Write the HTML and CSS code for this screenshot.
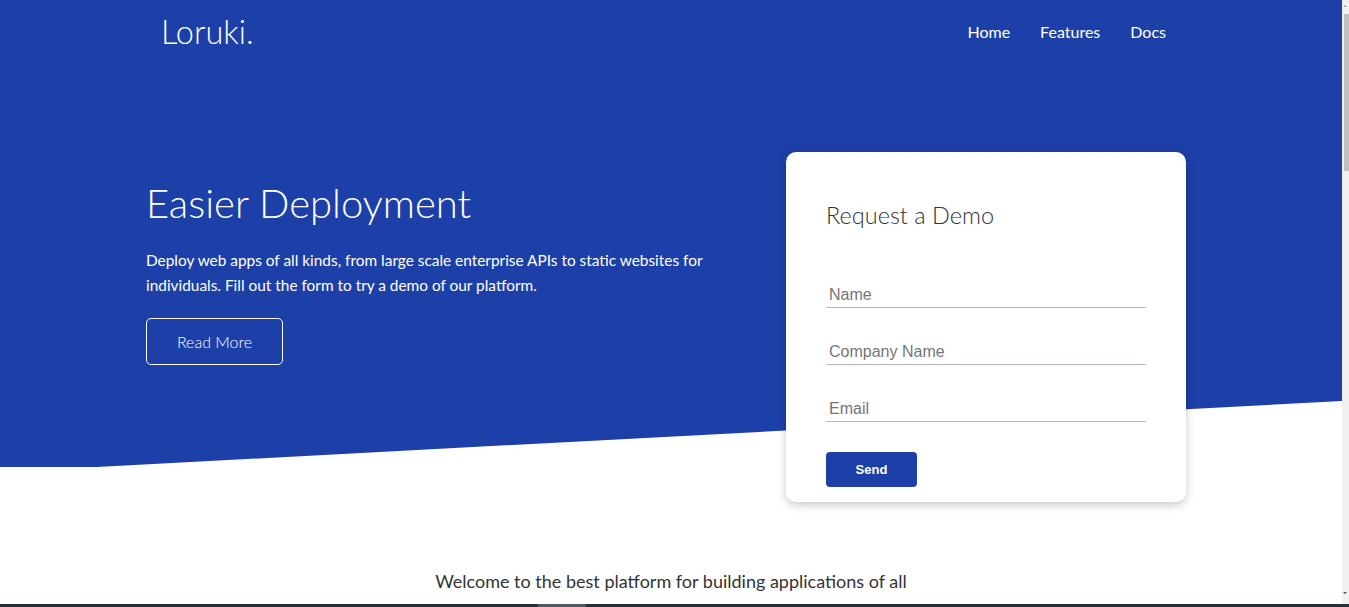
FILE: index.html
```html
<!DOCTYPE html>
<html lang="en">
<head>
<meta charset="utf-8">
<title>Loruki</title>
<link rel="stylesheet" href="styles.css">
</head>
<body>
<div class="page">
  <header class="hero">
    <nav class="navbar">
      <h1 class="logo">Loruki.</h1>
      <ul class="nav-links">
        <li><a href="#">Home</a></li>
        <li><a href="#">Features</a></li>
        <li><a href="#">Docs</a></li>
      </ul>
    </nav>
    <div class="showcase">
      <div class="showcase-text">
        <h2 class="showcase-title">Easier Deployment</h2>
        <p class="showcase-lead">Deploy web apps of all kinds, from large scale enterprise APIs to static websites for individuals. Fill out the form to try a demo of our platform.</p>
        <a href="#" class="btn-outline">Read More</a>
      </div>
      <div class="showcase-form">
        <h2 class="form-title">Request a Demo</h2>
        <form class="form">
          <input class="form-input" type="text" placeholder="Name">
          <input class="form-input" type="text" placeholder="Company Name">
          <input class="form-input" type="email" placeholder="Email">
          <button type="button" class="btn-send">Send</button>
        </form>
      </div>
    </div>
  </header>
  <section class="stats">
    <h3 class="stats-heading">Welcome to the best platform for building applications of all sizes</h3>
  </section>
</div>
<div class="scrollbar">
  <span class="scroll-arrow scroll-up"></span>
  <span class="scroll-thumb"></span>
  <span class="scroll-arrow scroll-down"></span>
</div>
<div class="bottom-bar"><span class="bottom-bar-seg"></span></div>
</body>
</html>
```
FILE: styles.css
```css
* { box-sizing: border-box; }
html, body { margin: 0; padding: 0; }
body {
  font-family: "Lato", "Open Sans", sans-serif;
  color: #333;
  background: #fff;
  overflow: hidden;
  height: 607px;
}
.page { width: calc(100% - 7px); }

.hero {
  background: #1d3fa8;
  color: #fff;
  height: 467px;
  position: relative;
}
.hero::before {
  content: "";
  position: absolute;
  left: 0;
  bottom: 0;
  width: 100%;
  height: 66px;
  background: #fff;
  clip-path: polygon(97px 100%, 100% 0, 100% 100%);
}

.navbar {
  width: 1020px;
  margin: 0 auto;
  height: 70px;
  display: flex;
  align-items: center;
  justify-content: space-between;
}
.logo {
  margin: 0;
  font-size: 32.5px;
  font-weight: 300;
  line-height: 1;
  padding-bottom: 6px;
}
.nav-links {
  list-style: none;
  margin: 0;
  padding: 0;
  display: flex;
  padding-bottom: 8px;
}
.nav-links a {
  display: block;
  color: #fff;
  text-decoration: none;
  font-size: 16px;
  padding: 0 15px;
}

.showcase {
  width: 1040px;
  margin-left: calc(50% - 525px);
  display: flex;
  justify-content: space-between;
  align-items: flex-start;
  position: relative;
  z-index: 2;
}
.showcase-text {
  width: 580px;
  margin-top: 109px;
}
.showcase-title {
  margin: 0;
  font-size: 40px;
  font-weight: 300;
  line-height: 48px;
}
.showcase-lead {
  margin: 21px 0 20px;
  font-size: 15.4px;
  font-weight: 400;
  line-height: 25px;
}
.btn-outline {
  display: inline-flex;
  align-items: center;
  justify-content: center;
  width: 137px;
  height: 47px;
  border: 1px solid #fff;
  border-radius: 5px;
  color: #fff;
  text-decoration: none;
  font-size: 16px;
  font-weight: 300;
}

.showcase-form {
  width: 400px;
  height: 350px;
  margin-top: 82px;
  padding: 49px 40px 0;
  background: #fff;
  color: #333;
  border-radius: 10px;
  box-shadow: 0 3px 10px rgba(0, 0, 0, 0.22);
}
.form-title {
  margin: 0 0 51px;
  font-size: 23.5px;
  font-weight: 300;
  line-height: 29px;
}
.form {
  display: flex;
  flex-direction: column;
  align-items: flex-start;
  gap: 30px;
}
.form-input {
  width: 320px;
  height: 27px;
  border: 0;
  border-bottom: 1px solid #b4b9c6;
  padding: 5px 3px 3px;
  font-family: "Liberation Sans", Arial, sans-serif;
  font-size: 16px;
  color: #333;
  outline: none;
  background: transparent;
}
.form-input::placeholder { color: #757575; }
.btn-send {
  width: 91px;
  height: 35px;
  border: 0;
  border-radius: 4px;
  background: #1d3fa8;
  color: #fff;
  font-family: "Liberation Sans", Arial, sans-serif;
  font-weight: 700;
  font-size: 13px;
}

.stats {
  padding-top: 99px;
  display: flex;
  justify-content: center;
}
.stats-heading {
  margin: 0;
  width: 480px;
  text-align: center;
  font-size: 18px;
  font-weight: 400;
  line-height: 30px;
  color: #333;
}

.scrollbar {
  position: fixed;
  top: 0;
  right: 0;
  width: 7px;
  height: 604px;
  background: #f1f1f1;
}
.scroll-thumb {
  position: absolute;
  left: 2px;
  right: 0;
  top: 14px;
  height: 157px;
  background: #c1c1c1;
}
.scroll-arrow {
  position: absolute;
  left: 1px;
  width: 0;
  height: 0;
  border-left: 2px solid transparent;
  border-right: 2px solid transparent;
}
.scroll-up { top: 5px; border-bottom: 2px solid #a3a3a3; }
.scroll-down { bottom: 10px; border-top: 2px solid #505050; }

.bottom-bar {
  position: fixed;
  left: 0;
  right: 0;
  bottom: 0;
  height: 3px;
  background: #263238;
}
.bottom-bar-seg {
  position: absolute;
  left: 538px;
  width: 48px;
  top: 0;
  bottom: 0;
  background: #4d585f;
}
```
